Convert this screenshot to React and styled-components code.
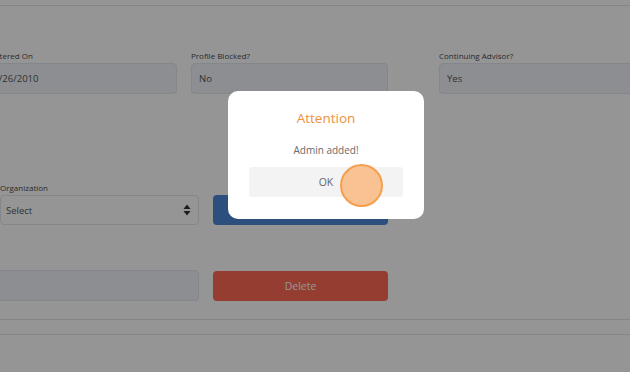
import React from "react";
import styled, { createGlobalStyle } from "styled-components";

const Global = createGlobalStyle`
  html, body { margin: 0; padding: 0; background: #ffffff; overflow: hidden; }
  body { font-family: "Open Sans", "Noto Sans", sans-serif; width: 630px; height: 372px; }
  * { box-sizing: border-box; }
`;

const Page = styled.div`
  width: 630px;
  height: 372px;
  padding-top: 5px;
  overflow: hidden;
`;

const Rule = styled.div`
  height: 0;
  border-top: 1px solid #e2e4e6;
  margin-top: ${(p) => p.$mt || 0}px;
`;

const Row = styled.div`
  display: flex;
  align-items: flex-end;
  margin-top: ${(p) => p.$mt}px;
  margin-left: ${(p) => p.$ml || 0}px;
`;

const Field = styled.div`
  display: flex;
  flex-direction: column;
  flex: none;
  width: ${(p) => p.$w}px;
  margin-right: ${(p) => p.$mr || 0}px;
`;

const Label = styled.label`
  font-size: 8px;
  line-height: 10px;
  color: #4a4a4a;
  margin-bottom: 2px;
  white-space: nowrap;
`;

const Box = styled.div`
  height: ${(p) => p.$h || 31}px;
  border: 1px solid #e0e6ec;
  border-radius: 4px;
  background: ${(p) => (p.$plain ? "#ffffff" : "#f0f4f8")};
  display: flex;
  align-items: center;
  justify-content: space-between;
  padding: 0 7px 0 ${(p) => p.$pl || 7}px;
  font-size: 9.5px;
  color: #555;
`;

const Button = styled.button`
  flex: none;
  width: 175px;
  height: 30px;
  margin-left: 14px;
  border: none;
  border-radius: 4px;
  background: ${(p) => p.$bg};
  color: ${(p) => p.$fg || "#ffffff"};
  font-family: inherit;
  font-size: 10.5px;
`;

const Overlay = styled.div`
  position: fixed;
  inset: 0;
  background: rgba(0, 0, 0, 0.415);
`;

const Modal = styled.div`
  position: fixed;
  left: 228px;
  top: 91px;
  width: 196px;
  height: 128px;
  background: #ffffff;
  border-radius: 10px;
  padding: 18px 21px 0;
  display: flex;
  flex-direction: column;
  align-items: center;
`;

const Title = styled.div`
  font-size: 13.5px;
  line-height: 18px;
  color: #f0913c;
`;

const Message = styled.div`
  margin-top: 16px;
  font-size: 10px;
  line-height: 14px;
  color: #6a6a6a;
`;

const OkButton = styled.button`
  margin-top: 10px;
  width: 154px;
  height: 30px;
  border: none;
  border-radius: 3px;
  background: #f3f3f3;
  color: #666;
  font-family: inherit;
  font-size: 10.5px;
`;

const ClickMark = styled.div`
  position: fixed;
  left: 340px;
  top: 164px;
  width: 43px;
  height: 43px;
  border-radius: 50%;
  background: #f8c292;
  border: 2px solid #f4a04e;
`;

const Arrows = () => (
  <svg width="8" height="12" viewBox="0 0 8 12">
    <path d="M4 0.5 L7.5 5 H0.5 Z" fill="#333" />
    <path d="M4 11.5 L7.5 7 H0.5 Z" fill="#333" />
  </svg>
);

export default function App() {
  return (
    <>
      <Global />
      <Page>
        <Rule />
        <Row $mt={45} $ml={-20}>
          <Field $w={197} $mr={14}>
            <Label>Registered On</Label>
            <Box>10/26/2010</Box>
          </Field>
          <Field $w={197} $mr={51}>
            <Label>Profile Blocked?</Label>
            <Box>No</Box>
          </Field>
          <Field $w={197}>
            <Label>Continuing Advisor?</Label>
            <Box>Yes</Box>
          </Field>
        </Row>
        <Row $mt={89}>
          <Field $w={199}>
            <Label>Organization</Label>
            <Box $plain $h={30} $pl={5}>
              Select
              <Arrows />
            </Box>
          </Field>
          <Button $bg="#4c88d6" />
        </Row>
        <Row $mt={45} $ml={-20}>
          <Field $w={219}>
            <Box $h={31} />
          </Field>
          <Button $bg="#fd6953">Delete</Button>
        </Row>
        <Rule $mt={18} />
        <Rule $mt={14} />
      </Page>
      <Overlay />
      <Modal>
        <Title>Attention</Title>
        <Message>Admin added!</Message>
        <OkButton>OK</OkButton>
      </Modal>
      <ClickMark />
    </>
  );
}
